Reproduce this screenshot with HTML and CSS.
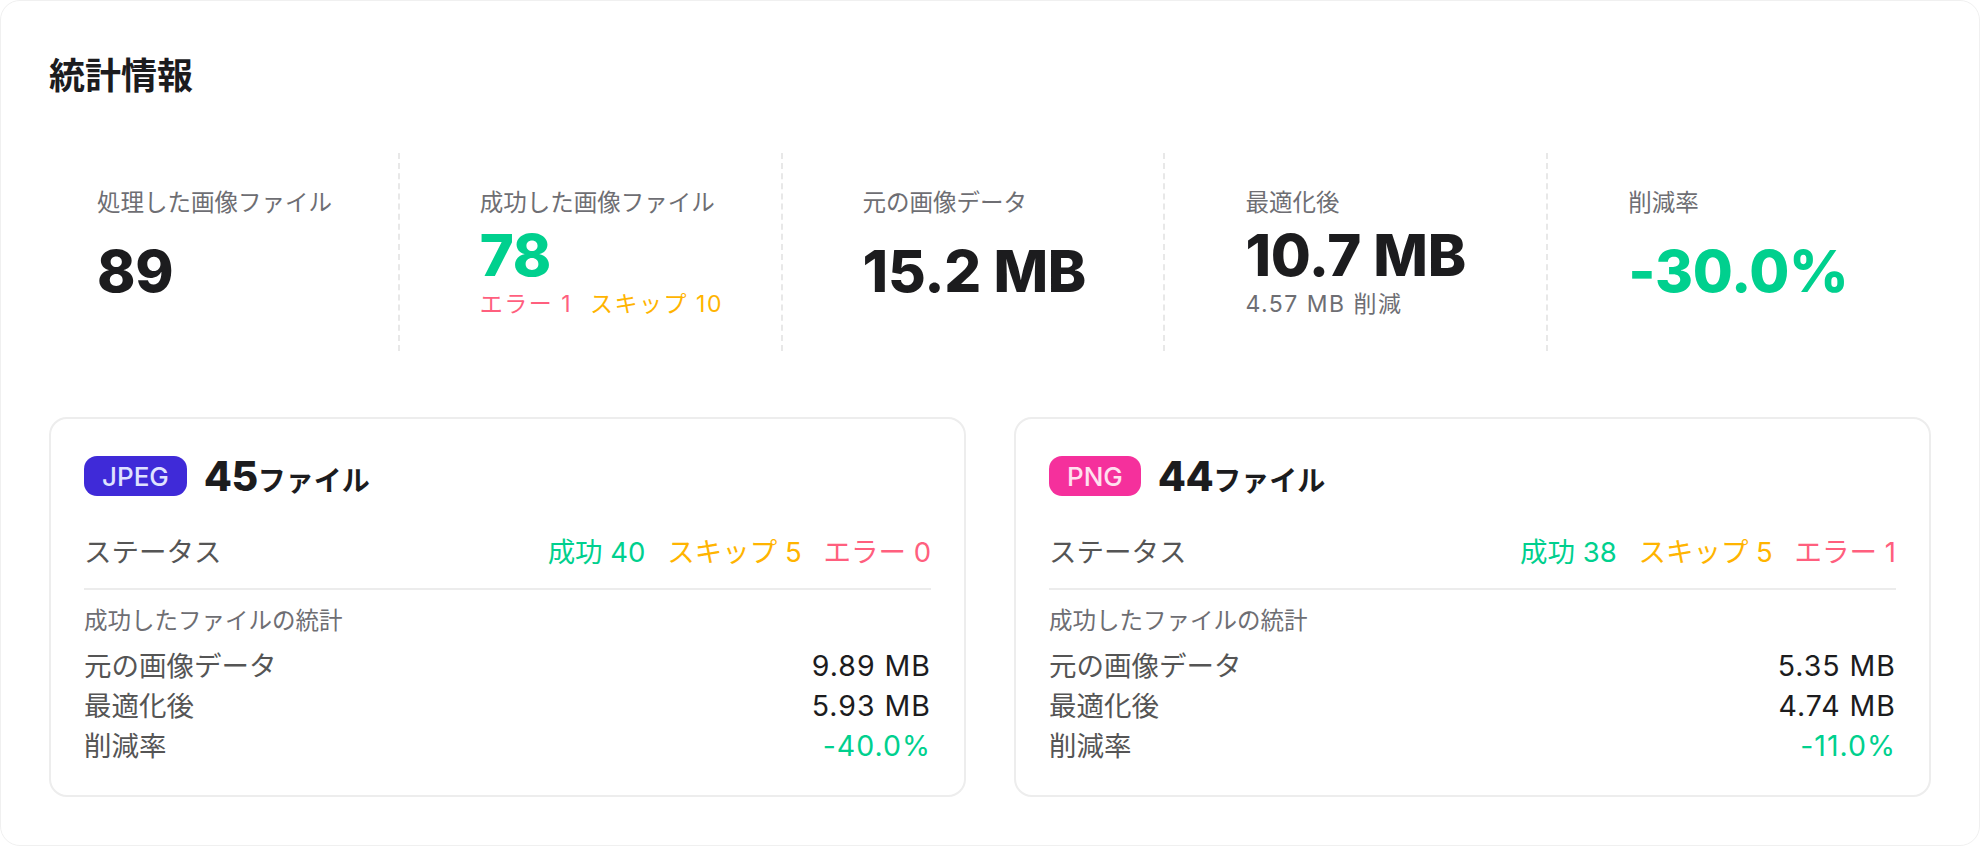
FILE: index.html
```html
<!DOCTYPE html>
<html lang="ja">
<head>
    <meta charset="UTF-8">
    <meta name="viewport" content="width=device-width, initial-scale=1.0">
    <title>統計情報</title>
    <link rel="stylesheet" href="styles.css">
</head>
<body>
    <div class="panel">
        <h2 class="panel-title">統計情報</h2>

        <div class="summary">
            <div class="summary-item">
                <div class="summary-label">処理した画像ファイル</div>
                <div class="summary-body">
                    <div class="summary-value">89</div>
                </div>
            </div>
            <div class="summary-item">
                <div class="summary-label">成功した画像ファイル</div>
                <div class="summary-body">
                    <div class="summary-value green">78</div>
                    <div class="summary-sub">
                        <span class="red">エラー 1</span>
                        <span class="yellow">スキップ 10</span>
                    </div>
                </div>
            </div>
            <div class="summary-item">
                <div class="summary-label">元の画像データ</div>
                <div class="summary-body">
                    <div class="summary-value">15.2 MB</div>
                </div>
            </div>
            <div class="summary-item">
                <div class="summary-label">最適化後</div>
                <div class="summary-body">
                    <div class="summary-value">10.7 MB</div>
                    <div class="summary-sub">4.57 MB 削減</div>
                </div>
            </div>
            <div class="summary-item">
                <div class="summary-label">削減率</div>
                <div class="summary-body">
                    <div class="summary-value green">-30.0%</div>
                </div>
            </div>
        </div>

        <div class="formats">
            <div class="format-card">
                <div class="format-head">
                    <span class="badge badge-jpeg">JPEG</span>
                    <span class="format-count"><b>45</b>ファイル</span>
                </div>
                <div class="status-row">
                    <span class="row-label">ステータス</span>
                    <span class="status-values">
                        <span class="green">成功 40</span>
                        <span class="yellow">スキップ 5</span>
                        <span class="red">エラー 0</span>
                    </span>
                </div>
                <div class="format-sub">成功したファイルの統計</div>
                <div class="detail-row"><span class="row-label">元の画像データ</span><span class="num">9.89 MB</span></div>
                <div class="detail-row"><span class="row-label">最適化後</span><span class="num">5.93 MB</span></div>
                <div class="detail-row"><span class="row-label">削減率</span><span class="num green">-40.0%</span></div>
            </div>

            <div class="format-card">
                <div class="format-head">
                    <span class="badge badge-png">PNG</span>
                    <span class="format-count"><b>44</b>ファイル</span>
                </div>
                <div class="status-row">
                    <span class="row-label">ステータス</span>
                    <span class="status-values">
                        <span class="green">成功 38</span>
                        <span class="yellow">スキップ 5</span>
                        <span class="red">エラー 1</span>
                    </span>
                </div>
                <div class="format-sub">成功したファイルの統計</div>
                <div class="detail-row"><span class="row-label">元の画像データ</span><span class="num">5.35 MB</span></div>
                <div class="detail-row"><span class="row-label">最適化後</span><span class="num">4.74 MB</span></div>
                <div class="detail-row"><span class="row-label">削減率</span><span class="num green">-11.0%</span></div>
            </div>
        </div>
    </div>
</body>
</html>
```

FILE: styles.css
```css
html, body {
    margin: 0;
    padding: 0;
    background: #fff;
}
body {
    font-family: Inter, "Noto Sans CJK JP", sans-serif;
    color: #1c1c1e;
}
.panel {
    box-sizing: border-box;
    height: 846px;
    padding: 48px;
    border: 1px solid #f0f0f0;
    border-radius: 20px;
    background: #fff;
}
.panel-title {
    margin: 0;
    font-size: 36px;
    line-height: 54px;
    font-weight: 700;
}

/* summary row */
.summary {
    display: grid;
    grid-template-columns: repeat(5, 1fr);
    gap: 32px;
    margin-top: 50px;
}
.summary-item {
    display: flex;
    flex-direction: column;
    box-sizing: border-box;
    height: 198px;
    padding: 32px 0 30px 48px;
    border-right: 2px dashed #e8e8e8;
}
.summary-item:last-child {
    border-right: none;
}
.summary-label {
    font-size: 23.5px;
    line-height: 36px;
    color: #6e6e73;
}
.summary-body {
    flex: 1;
    display: flex;
    flex-direction: column;
    justify-content: center;
}
.summary-value {
    font-size: 58px;
    line-height: 64px;
    font-weight: 800;
    letter-spacing: -0.3px;
}
.summary-sub {
    margin-top: 2px;
    font-size: 23px;
    line-height: 30px;
    letter-spacing: 1.5px;
    color: #6e6e73;
}
.summary-sub span + span {
    margin-left: 10px;
}

.green { color: #00d08e; }
.yellow { color: #ffb400; }
.red { color: #ff5f7e; }

/* format cards */
.formats {
    display: grid;
    grid-template-columns: 1fr 1fr;
    gap: 48px;
    margin-top: 66px;
}
.format-card {
    box-sizing: border-box;
    height: 380px;
    padding: 33px 33px 0;
    border: 2px solid #ededed;
    border-radius: 18px;
}
.format-head {
    display: flex;
    align-items: center;
    gap: 17px;
    height: 48px;
}
.badge {
    display: inline-flex;
    align-items: center;
    height: 40px;
    padding: 0 18px;
    border-radius: 13px;
    font-size: 26px;
    font-weight: 500;
}
.badge-jpeg {
    background: #3f2ad8;
    color: #dfe2ff;
}
.badge-png {
    background: #f5309c;
    color: #ffe0ef;
}
.format-count {
    font-size: 28px;
    font-weight: 700;
}
.format-count b {
    font-size: 41px;
    font-weight: 800;
    letter-spacing: -0.5px;
}
.status-row {
    display: flex;
    justify-content: space-between;
    margin-top: 32px;
    padding-bottom: 16px;
    border-bottom: 2px solid #ececec;
    font-size: 27.5px;
    line-height: 40px;
}
.status-values span + span {
    margin-left: 14px;
}
.row-label {
    color: #555;
}
.format-sub {
    margin-top: 13px;
    font-size: 23.5px;
    line-height: 36px;
    color: #6e6e73;
}
.detail-row {
    display: flex;
    justify-content: space-between;
    font-size: 27.5px;
    line-height: 40px;
}
.detail-row .num {
    font-size: 28.5px;
    letter-spacing: 1px;
}
.format-sub + .detail-row {
    margin-top: 7px;
}
```
